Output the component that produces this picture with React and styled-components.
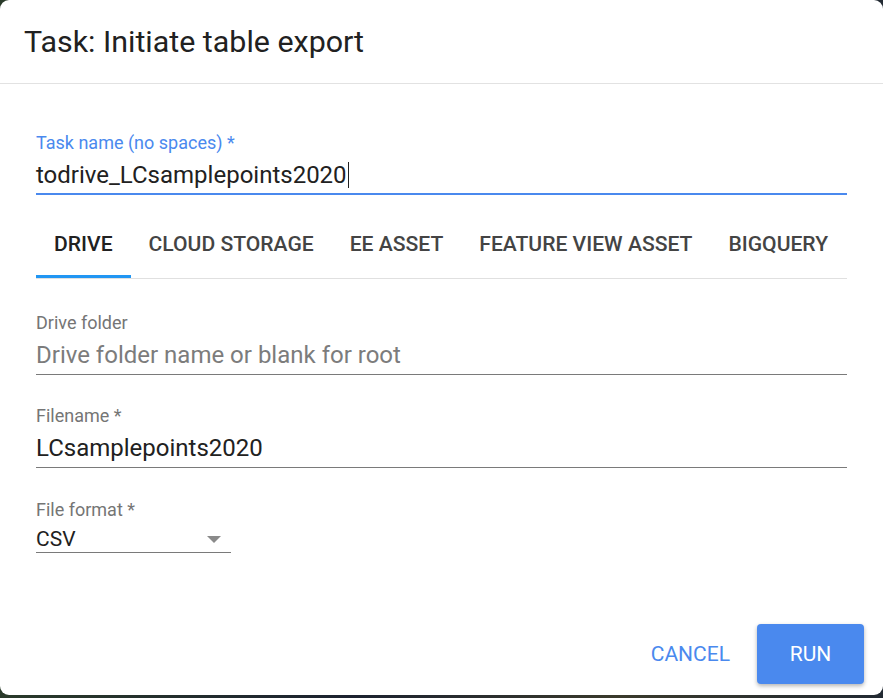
import React from 'react';
import styled, { createGlobalStyle } from 'styled-components';

const GlobalStyle = createGlobalStyle`
  html, body {
    margin: 0;
    padding: 0;
    height: 100%;
    background: #1f2a2b;
  }
  body {
    font-family: Roboto, "Noto Sans", Arial, sans-serif;
  }
`;

const Backdrop = styled.div`
  width: 883px;
  height: 698px;
  padding-bottom: 3px;
  box-sizing: border-box;
  background: linear-gradient(90deg, #2a3a2a, #1c2230 40%, #3a3a2c 70%, #222a33);
`;

const Dialog = styled.div`
  height: 100%;
  background: #fff;
  border-radius: 9px;
  display: flex;
  flex-direction: column;
  overflow: hidden;
`;

const Header = styled.div`
  height: 84px;
  box-sizing: border-box;
  padding: 24px 24px 0;
  border-bottom: 1px solid #e2e2e2;
`;

const Title = styled.h2`
  margin: 0;
  font-size: 30.4px;
  font-weight: 400;
  color: #212121;
  line-height: 36px;
`;

const Body = styled.div`
  flex: 1;
  padding: 48px 36px 0;
  display: flex;
  flex-direction: column;
`;

const Field = styled.div`
  display: flex;
  flex-direction: column;
  width: ${p => p.width || '811px'};
  margin-bottom: ${p => p.gap || '0'};
  border-bottom: ${p => (p.focused ? '2px solid #4a89ee' : '1px solid #7a7a7a')};
`;

const Label = styled.label`
  font-size: 18px;
  line-height: 22px;
  color: ${p => (p.focused ? '#4a89ee' : '#757575')};
`;

const Value = styled.div`
  font-size: 24px;
  line-height: 32px;
  padding: ${p => (p.focused ? '5px 0 2px' : '5px 0 3px')};
  color: ${p => (p.placeholder ? '#7c7c7c' : '#212121')};
  display: flex;
  align-items: center;
`;

const Caret = styled.span`
  display: inline-block;
  width: 1px;
  height: 26px;
  background: #212121;
  margin-left: 1px;
`;

const Tabs = styled.div`
  display: flex;
  width: 811px;
  margin-top: 14px;
  margin-bottom: 33px;
  border-bottom: 1px solid #e0e0e0;
`;

const Tab = styled.div`
  flex-shrink: 0;
  white-space: nowrap;
  padding: 2px 18px 0;
  height: 69px;
  box-sizing: border-box;
  display: flex;
  align-items: center;
  font-size: 21.1px;
  font-weight: 500;
  color: ${p => (p.active ? '#212121' : '#444')};
  border-bottom: 3px solid ${p => (p.active ? '#2196f3' : 'transparent')};
`;

const SelectValue = styled.div`
  font-size: 21px;
  line-height: 26px;
  padding: 5px 10px 0 0;
  color: #212121;
  display: flex;
  align-items: center;
  justify-content: space-between;
`;

const Arrow = styled.span`
  width: 0;
  height: 0;
  border-left: 7px solid transparent;
  border-right: 7px solid transparent;
  border-top: 7px solid #8a8a8a;
`;

const Actions = styled.div`
  display: flex;
  justify-content: flex-end;
  align-items: center;
  gap: 27px;
  padding: 0 19px 11px 0;
`;

const TextButton = styled.button`
  border: none;
  background: none;
  font-family: inherit;
  font-size: 21px;
  color: #4a89ee;
  padding: 0;
  cursor: pointer;
`;

const RaisedButton = styled.button`
  width: 107px;
  height: 60px;
  border: none;
  border-radius: 4px;
  background: #4a89ee;
  color: #fff;
  font-family: inherit;
  font-size: 21px;
  box-shadow: 0 2px 4px rgba(0, 0, 0, 0.3);
  cursor: pointer;
`;

const tabs = ['DRIVE', 'CLOUD STORAGE', 'EE ASSET', 'FEATURE VIEW ASSET', 'BIGQUERY'];

export default function App() {
  return (
    <>
      <GlobalStyle />
      <Backdrop>
        <Dialog>
          <Header>
            <Title>Task: Initiate table export</Title>
          </Header>
          <Body>
            <Field focused>
              <Label focused>Task name (no spaces) *</Label>
              <Value focused>
                todrive_LCsamplepoints2020
                <Caret />
              </Value>
            </Field>
            <Tabs>
              {tabs.map((t, i) => (
                <Tab key={t} active={i === 0}>{t}</Tab>
              ))}
            </Tabs>
            <Field gap="30px">
              <Label>Drive folder</Label>
              <Value placeholder>Drive folder name or blank for root</Value>
            </Field>
            <Field gap="31px">
              <Label>Filename *</Label>
              <Value>LCsamplepoints2020</Value>
            </Field>
            <Field width="195px">
              <Label>File format *</Label>
              <SelectValue>
                CSV
                <Arrow />
              </SelectValue>
            </Field>
          </Body>
          <Actions>
            <TextButton>CANCEL</TextButton>
            <RaisedButton>RUN</RaisedButton>
          </Actions>
        </Dialog>
      </Backdrop>
    </>
  );
}
